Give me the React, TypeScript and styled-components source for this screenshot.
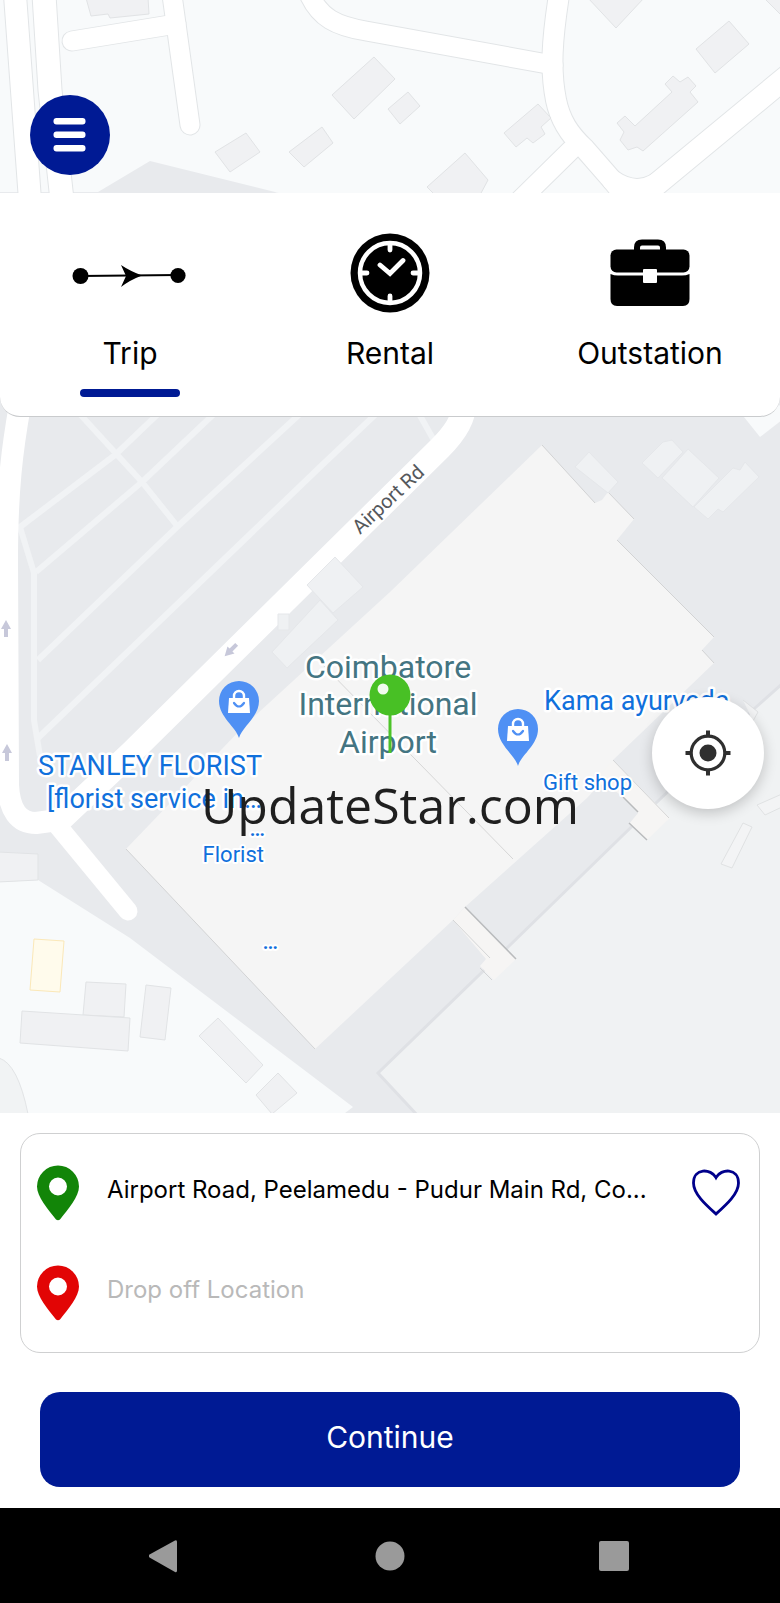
import React, { useState } from "react";
import styled, { createGlobalStyle } from "styled-components";

const GlobalStyle = createGlobalStyle`
  *, *::before, *::after { box-sizing: border-box; }
  body { margin: 0; background: #fff; }
  button, input { font: inherit; color: inherit; }
`;

const brand = "#001a94";

const Screen = styled.div`
  display: flex;
  flex-direction: column;
  min-height: 100vh;
  font-family: Inter, "Liberation Sans", sans-serif;
  color: #000;
  background: #fff;
`;

const MapStage = styled.main`
  position: relative;
  flex: 1 0 auto;
  display: flex;
  flex-direction: column;
  min-height: 960px;
  overflow: hidden;
`;

const MapDrawing = styled.svg`
  position: absolute;
  inset: 0;
  width: 100%;
  height: 100%;
  font-family: Roboto, sans-serif;
`;

const TopBar = styled.header`
  position: relative;
  padding: 95px 30px 18px;
`;

const MenuButton = styled.button`
  display: flex;
  align-items: center;
  justify-content: center;
  width: 80px;
  height: 80px;
  padding: 0;
  border: 0;
  border-radius: 50%;
  background: ${brand};
  cursor: pointer;
`;

const RideTabs = styled.nav`
  position: relative;
  display: grid;
  grid-template-columns: repeat(3, 1fr);
  height: 224px;
  background: #fff;
  border-bottom: 1px solid #c9cbcd;
  border-radius: 0 0 20px 20px;
`;

const RideTab = styled.button<{ $active: boolean }>`
  display: flex;
  flex-direction: column;
  align-items: center;
  padding: 36px 0 0;
  border: 0;
  background: none;
  font-size: 30px;
  line-height: 36px;
  cursor: pointer;

  &::after {
    content: "";
    width: 100px;
    height: 8px;
    margin-top: 18px;
    border-radius: 4px;
    background: ${(p) => (p.$active ? brand : "transparent")};
  }
`;

const TabIcon = styled.svg`
  width: 120px;
  height: 88px;
  margin-bottom: 18px;
`;

const LocateButton = styled.button`
  position: absolute;
  right: 16px;
  bottom: 304px;
  display: flex;
  align-items: center;
  justify-content: center;
  width: 112px;
  height: 112px;
  padding: 0;
  border: 0;
  border-radius: 50%;
  background: #fff;
  box-shadow: 0 4px 14px rgba(0, 0, 0, 0.2);
  cursor: pointer;
`;

const Watermark = styled.div`
  position: absolute;
  left: 0;
  right: 0;
  bottom: 272px;
  font-family: "Open Sans", "Noto Sans", sans-serif;
  font-size: 50px;
  line-height: 72px;
  text-align: center;
  color: #1f1f1f;
  pointer-events: none;
`;

const Sheet = styled.form`
  padding: 20px 20px 21px;
  background: #fff;
`;

const RouteCard = styled.div`
  padding: 9px 16px;
  border: 1px solid #cfd0d1;
  border-radius: 20px;
`;

const RouteRow = styled.div`
  display: flex;
  align-items: center;
  height: 100px;
`;

const PinLabel = styled.label`
  display: flex;
  flex: none;
  margin-right: 28px;
`;

const PlaceInput = styled.input`
  flex: 1;
  min-width: 0;
  padding: 0 0 6px;
  border: 0;
  outline: 0;
  background: none;
  font-size: 24px;
  line-height: 32px;
  text-overflow: ellipsis;

  &::placeholder {
    color: #b9b9b9;
    opacity: 1;
  }
`;

const HeartButton = styled.button`
  display: flex;
  flex: none;
  padding: 0;
  border: 0;
  background: none;
  cursor: pointer;
`;

const ContinueButton = styled.button`
  display: block;
  width: calc(100% - 40px);
  height: 95px;
  margin: 39px 20px 0;
  padding: 0 0 6px;
  border: 0;
  border-radius: 20px;
  background: ${brand};
  color: #fff;
  font-size: 30px;
  line-height: 36px;
  cursor: pointer;
`;

const SystemBar = styled.footer`
  display: grid;
  grid-template-columns: repeat(3, 1fr);
  height: 95px;
  padding: 0 54px;
  background: #000;
`;

const SystemButton = styled.button`
  display: flex;
  align-items: center;
  justify-content: center;
  padding: 0;
  border: 0;
  background: none;
  cursor: pointer;
`;

const buildings = [
  "374,57 395,79 354,119 332,95",
  "408,92 420,106 400,124 388,109",
  "246,133 260,152 230,172 215,152",
  "322,127 333,143 304,167 289,152",
  "465,153 488,180 480,195 435,195 427,187",
  "538,104 551,118 541,127 545,134 533,143 527,138 516,147 504,133",
  "729,21 749,44 715,73 696,49",
  "588,-2 644,-2 616,28",
  "764,-2 782,-2 782,16",
  "673,76 680,82 688,77 696,86 690,92 698,102 643,151 637,147 628,150 620,140 624,132 617,123 625,116 635,126 672,92 665,84",
  "86,-2 148,-2 149,14 110,18 108,14 91,16",
  "86,982 126,984 124,1017 83,1015",
  "22,1011 130,1018 128,1051 20,1043",
  "146,985 171,988 165,1040 140,1037",
  "218,1018 263,1065 246,1083 199,1036",
  "278,1073 297,1093 272,1114 256,1095",
  "-2,852 38,854 38,880 -2,882",
];

const airportBuildings = [
  "335,557 363,587 333,613 307,585",
  "320,600 338,620 287,668 272,652",
  "278,614 289,614 289,630 278,630",
  "663,442 672,440 683,452 658,478 642,463",
  "688,449 719,478 693,507 662,478",
  "733,468 740,470 745,462 759,477 723,512 718,509 708,519 694,507",
  "589,452 618,482 608,493 575,467",
];

const streets: { d: string; w: number }[] = [
  { d: "M15,-5 L30,200", w: 22 },
  { d: "M44,-5 L50,90 L62,200", w: 23 },
  { d: "M72,41 L176,24", w: 19 },
  { d: "M172,-5 L190,125", w: 19 },
  { d: "M309,-6 C320,18 336,26 366,31 L553,65", w: 19 },
  { d: "M559,-5 C552,40 550,70 556,100 C560,120 569,134 584,148 L612,180 Q640,200 668,175", w: 20 },
  { d: "M612,180 L640,215", w: 20 },
  { d: "M571,150 L515,205", w: 19 },
  { d: "M640,198 L790,74", w: 22 },
];

const airportRoads: { d: string; w: number }[] = [
  { d: "M20,405 C12,450 7,490 7,560 L8,785 Q10,823 36,823 L58,820", w: 22 },
  { d: "M464,405 Q464,424 440,448 L132,752 L58,822", w: 24 },
  { d: "M58,826 L128,911", w: 19 },
];

const aisles = [
  "M78,412 L142,482 L178,527",
  "M160,412 L115,455 L20,527 L34,573 L34,720 L40,756",
  "M216,412 L142,482 L36,572",
  "M302,412 L177,527 L38,660",
  "M378,412 L320,467 L38,738",
  "M418,412 L436,444",
];

type ShopPinProps = { x: number; y: number };

const ShopPin = ({ x, y }: ShopPinProps) => (
  <g transform={`translate(${x} ${y})`}>
    <path d="M0,37 C-3,26 -20,16 -20,0 A20,20 0 0 1 20,0 C20,16 3,26 0,37Z" fill="#4f90f4" />
    <path d="M-10,-3 H10 L11,12 H-11Z" fill="#fff" />
    <path d="M-5,-2 V-5 A5,5 0 0 1 5,-5 V-2" fill="none" stroke="#fff" strokeWidth="2.4" />
    <path d="M-5,2 Q0,9 5,2" fill="none" stroke="#4f90f4" strokeWidth="2.2" strokeLinecap="round" />
  </g>
);

type ArrowProps = { x: number; y: number; turn: number };

const OneWayArrow = ({ x, y, turn }: ArrowProps) => (
  <path
    transform={`translate(${x} ${y}) rotate(${turn})`}
    d="M0,-9 L5,0 H2 V8 H-2 V0 H-5Z"
    fill="#c7c8da"
  />
);

const CityMap = () => (
  <MapDrawing viewBox="0 0 780 1113" preserveAspectRatio="xMidYMid slice" role="img" aria-label="Map of Coimbatore International Airport">
    <rect width="780" height="1113" fill="#f8fafb" />
    <path d="M150,161 L275,192 L780,300 V1113 H345 L353,1107 L130,938 L38,880 L-2,882 V192 H98Z" fill="#e8eaed" />
    <path d="M275,192 H780 V300Z" fill="#f8fafb" />
    <path d="M740,412 L760,437 L782,420 V405Z" fill="#f8fafb" />

    {streets.map((s) => (
      <path key={s.d} d={s.d} fill="none" stroke="#e2e5e7" strokeWidth={s.w + 2} strokeLinecap="round" />
    ))}
    {streets.map((s) => (
      <path key={s.d} d={s.d} fill="none" stroke="#fff" strokeWidth={s.w} strokeLinecap="round" />
    ))}

    {buildings.map((points) => (
      <polygon key={points} points={points} fill="#f0f1f3" stroke="#e1e3e5" strokeWidth="1" />
    ))}
    <polygon points="34,939 64,941 60,992 30,990" fill="#fffbec" stroke="#fbe8b8" />
    <path d="M-1,1058 Q18,1064 28,1114 H-1Z" fill="#f1f3f4" stroke="#e2e4e6" />

    {aisles.map((d) => (
      <path key={d} d={d} fill="none" stroke="#f1f3f5" strokeWidth="6" strokeLinejoin="round" />
    ))}
    {airportRoads.map((s) => (
      <path key={s.d} d={s.d} fill="none" stroke="#fff" strokeWidth={s.w} strokeLinecap="round" strokeLinejoin="round" />
    ))}

    <path d="M782,684 L755,708 L657,802 L507,948 L378,1073 L418,1116 H782Z" fill="#f0f2f3" stroke="#dfe1e5" strokeWidth="3" />
    <path
      d="M542,445 L595,503 L602,500 L608,492 L634,519 L617,540 L714,637 L702,650 L714,663 L613,760 L640,788 L623,795 L600,784 L587,798 L465,907 L453,920 L315,1049 L126,849 L245,725 L390,592Z"
      fill="#f5f5f5"
    />
    <path d="M126,849 L315,1049 M542,445 L595,503 M608,492 L634,519 M617,540 L714,637 M702,650 L714,663" fill="none" stroke="#d2d3d4" />
    <path d="M320,662 L513,859" stroke="#d6d6d6" />
    <polygon points="465,907 516,959 494,980 480,966 486,959 453,920" fill="#f6f5f4" />
    <polygon points="613,760 670,818 647,840 629,824 638,813 600,775" fill="#f6f5f4" />
    <path d="M465,907 L516,959 M623,797 L638,812 M629,823 L647,840" stroke="#b9bbbd" strokeWidth="1.5" />
    <path d="M453,920 L490,958 M480,968 L492,980 M613,760 L669,818" stroke="#d4d5d6" />
    {airportBuildings.map((points) => (
      <polygon key={points} points={points} fill="#eff1f3" stroke="#e5e7ea" />
    ))}
    <path d="M743,823 L752,827 L732,868 L721,864Z M782,794 L757,805 L765,815 L782,807 M743,700 L758,712 L753,721" fill="#f3f4f5" stroke="#e0e2e3" />

    <OneWayArrow x={6} y={629} turn={0} />
    <OneWayArrow x={7} y={753} turn={0} />
    <OneWayArrow x={231} y={650} turn={225} />

    <g stroke="#fff" strokeLinejoin="round" paintOrder="stroke">
      <text transform="translate(360 535) rotate(-43)" fontSize="20" fill="#55585c" strokeWidth="3">Airport Rd</text>
      <g fontSize="32" fill="#447582" strokeWidth="5" textAnchor="middle">
        <text x="388" y="678">Coimbatore</text>
        <text x="388" y="715">International</text>
        <text x="388" y="753">Airport</text>
      </g>
      <g fontSize="27" fill="#1070dc" strokeWidth="5">
        <text x="262" y="775" textAnchor="end">STANLEY FLORIST</text>
        <text x="262" y="808" textAnchor="end">[florist service in…</text>
        <text x="544" y="710">Kama ayurveda</text>
      </g>
      <g fontSize="22" fill="#1070dc" strokeWidth="4">
        <text x="265" y="836" fontWeight="500" textAnchor="end">…</text>
        <text x="264" y="862" textAnchor="end">Florist</text>
        <text x="278" y="949" fontWeight="500" textAnchor="end">…</text>
        <text x="543" y="790">Gift shop</text>
      </g>
    </g>

    <ShopPin x={239} y={701} />
    <ShopPin x={518} y={729} />

    <path d="M390,712 V753" stroke="#4cc329" strokeWidth="3" />
    <circle cx="390" cy="695" r="20.500" fill="#48c025" />
    <circle cx="383" cy="689" r="5.500" fill="#f1fbee" />
  </MapDrawing>
);

const TripIcon = () => (
  <TabIcon viewBox="0 0 120 88" aria-hidden="true">
    <path d="M10.500,47 L108,46" stroke="#000" strokeWidth="2.200" />
    <circle cx="10.500" cy="47" r="8" />
    <circle cx="108" cy="46.500" r="7.600" />
    <path d="M51,36 Q60,42 72,46.500 Q60,51 51,58 L56,47Z" />
  </TabIcon>
);

const ClockIcon = () => (
  <TabIcon viewBox="0 0 120 88" aria-hidden="true">
    <circle cx="60" cy="44" r="39.500" />
    <circle cx="60" cy="44" r="30" fill="none" stroke="#fff" strokeWidth="4.500" />
    <path
      d="M60,15 V21 M60,67 V73 M31,44 H37 M83,44 H89 M50,36 L60,44.500 L73,31.500"
      fill="none"
      stroke="#fff"
      strokeWidth="4.800"
      strokeLinecap="round"
    />
  </TabIcon>
);

const BriefcaseIcon = () => (
  <TabIcon viewBox="0 0 120 88" aria-hidden="true">
    <path d="M47,22 V18.500 Q47,13.500 52,13.500 H68 Q73,13.500 73,18.500 V22" fill="none" stroke="#000" strokeWidth="6" />
    <rect x="20.500" y="20.500" width="79" height="23" rx="6" />
    <path d="M20.500,45 Q24,46.500 28,46.500 H92 Q96,46.500 99.500,45 V70 Q99.500,77 93,77 H27 Q20.500,77 20.500,70Z" />
    <rect x="53" y="40" width="14" height="14" rx="1" fill="#fff" />
  </TabIcon>
);

const PinIcon = ({ color }: { color: string }) => (
  <svg width="42" height="56" viewBox="0 0 42 56" aria-hidden="true">
    <path
      fillRule="evenodd"
      fill={color}
      d="M21,0.500 A21,21 0 0 1 42,21.500 C42,32 31,44 23,54.500 Q21,56 19,54.500 C11,44 0,32 0,21.500 A21,21 0 0 1 21,0.500Z M21,12.500 A9,9 0 1 0 21,30.500 A9,9 0 1 0 21,12.500Z"
    />
  </svg>
);

const rides = [
  { name: "Trip", Icon: TripIcon },
  { name: "Rental", Icon: ClockIcon },
  { name: "Outstation", Icon: BriefcaseIcon },
];

export default function App() {
  const [ride, setRide] = useState("Trip");
  const [pickup, setPickup] = useState("Airport Road, Peelamedu - Pudur Main Rd, Co...");
  const [dropOff, setDropOff] = useState("");

  return (
    <Screen>
      <GlobalStyle />
      <MapStage>
        <CityMap />
        <TopBar>
          <MenuButton type="button" aria-label="Menu">
            <svg width="34" height="34" viewBox="0 0 34 34" fill="#fff" aria-hidden="true">
              <rect x="0.500" width="32" height="6.500" rx="3" />
              <rect x="0.500" y="13.500" width="32" height="6.500" rx="3" />
              <rect x="0.500" y="27" width="32" height="6.500" rx="3" />
            </svg>
          </MenuButton>
        </TopBar>
        <RideTabs aria-label="Ride type">
          {rides.map(({ name, Icon }) => (
            <RideTab key={name} type="button" $active={ride === name} aria-pressed={ride === name} onClick={() => setRide(name)}>
              <Icon />
              {name}
            </RideTab>
          ))}
        </RideTabs>
        <LocateButton type="button" aria-label="My location">
          <svg width="46" height="46" viewBox="0 0 46 46" fill="none" stroke="#2f2f2f" strokeWidth="4" aria-hidden="true">
            <circle cx="23" cy="23" r="16.800" strokeWidth="3.200" />
            <circle cx="23" cy="23" r="8.500" fill="#2f2f2f" stroke="none" />
            <path d="M23,0.500 V7 M23,39 V45.500 M0.500,23 H7 M39,23 H45.500" />
          </svg>
        </LocateButton>
        <Watermark>UpdateStar.com</Watermark>
      </MapStage>

      <Sheet onSubmit={(e) => e.preventDefault()}>
        <RouteCard>
          <RouteRow>
            <PinLabel htmlFor="pickup" aria-label="Pick up location">
              <PinIcon color="#128508" />
            </PinLabel>
            <PlaceInput id="pickup" value={pickup} onChange={(e) => setPickup(e.target.value)} />
            <HeartButton type="button" aria-label="Save to favourites">
              <svg width="54" height="48" viewBox="0 0 54 48" fill="none" stroke="#00008b" strokeWidth="2.800" aria-hidden="true">
                <path d="M27,8.500 C22,-0.500 4.500,-1.500 4.500,14 C4.500,25 17,36 27,45 C37,36 49.500,25 49.500,14 C49.500,-1.500 32,-0.500 27,8.500Z" />
              </svg>
            </HeartButton>
          </RouteRow>
          <RouteRow>
            <PinLabel htmlFor="dropoff" aria-label="Drop off location">
              <PinIcon color="#e20505" />
            </PinLabel>
            <PlaceInput id="dropoff" placeholder="Drop off Location" value={dropOff} onChange={(e) => setDropOff(e.target.value)} />
          </RouteRow>
        </RouteCard>
        <ContinueButton type="submit">Continue</ContinueButton>
      </Sheet>

      <SystemBar>
        <SystemButton type="button" aria-label="Back">
          <svg width="34" height="34" viewBox="0 0 34 34" fill="#9a9a9a" aria-hidden="true">
            <path d="M0.500,15.500 L26,1.500 Q28,0.500 28,3 V31.500 Q28,34 26,33 L0.500,18.500 Q-1,17 0.500,15.500Z" />
          </svg>
        </SystemButton>
        <SystemButton type="button" aria-label="Home">
          <svg width="30" height="30" viewBox="0 0 30 30" fill="#9a9a9a" aria-hidden="true">
            <circle cx="15" cy="15" r="14.500" />
          </svg>
        </SystemButton>
        <SystemButton type="button" aria-label="Recent apps">
          <svg width="30" height="30" viewBox="0 0 30 30" fill="#9a9a9a" aria-hidden="true">
            <rect width="30" height="30" rx="2" />
          </svg>
        </SystemButton>
      </SystemBar>
    </Screen>
  );
}
